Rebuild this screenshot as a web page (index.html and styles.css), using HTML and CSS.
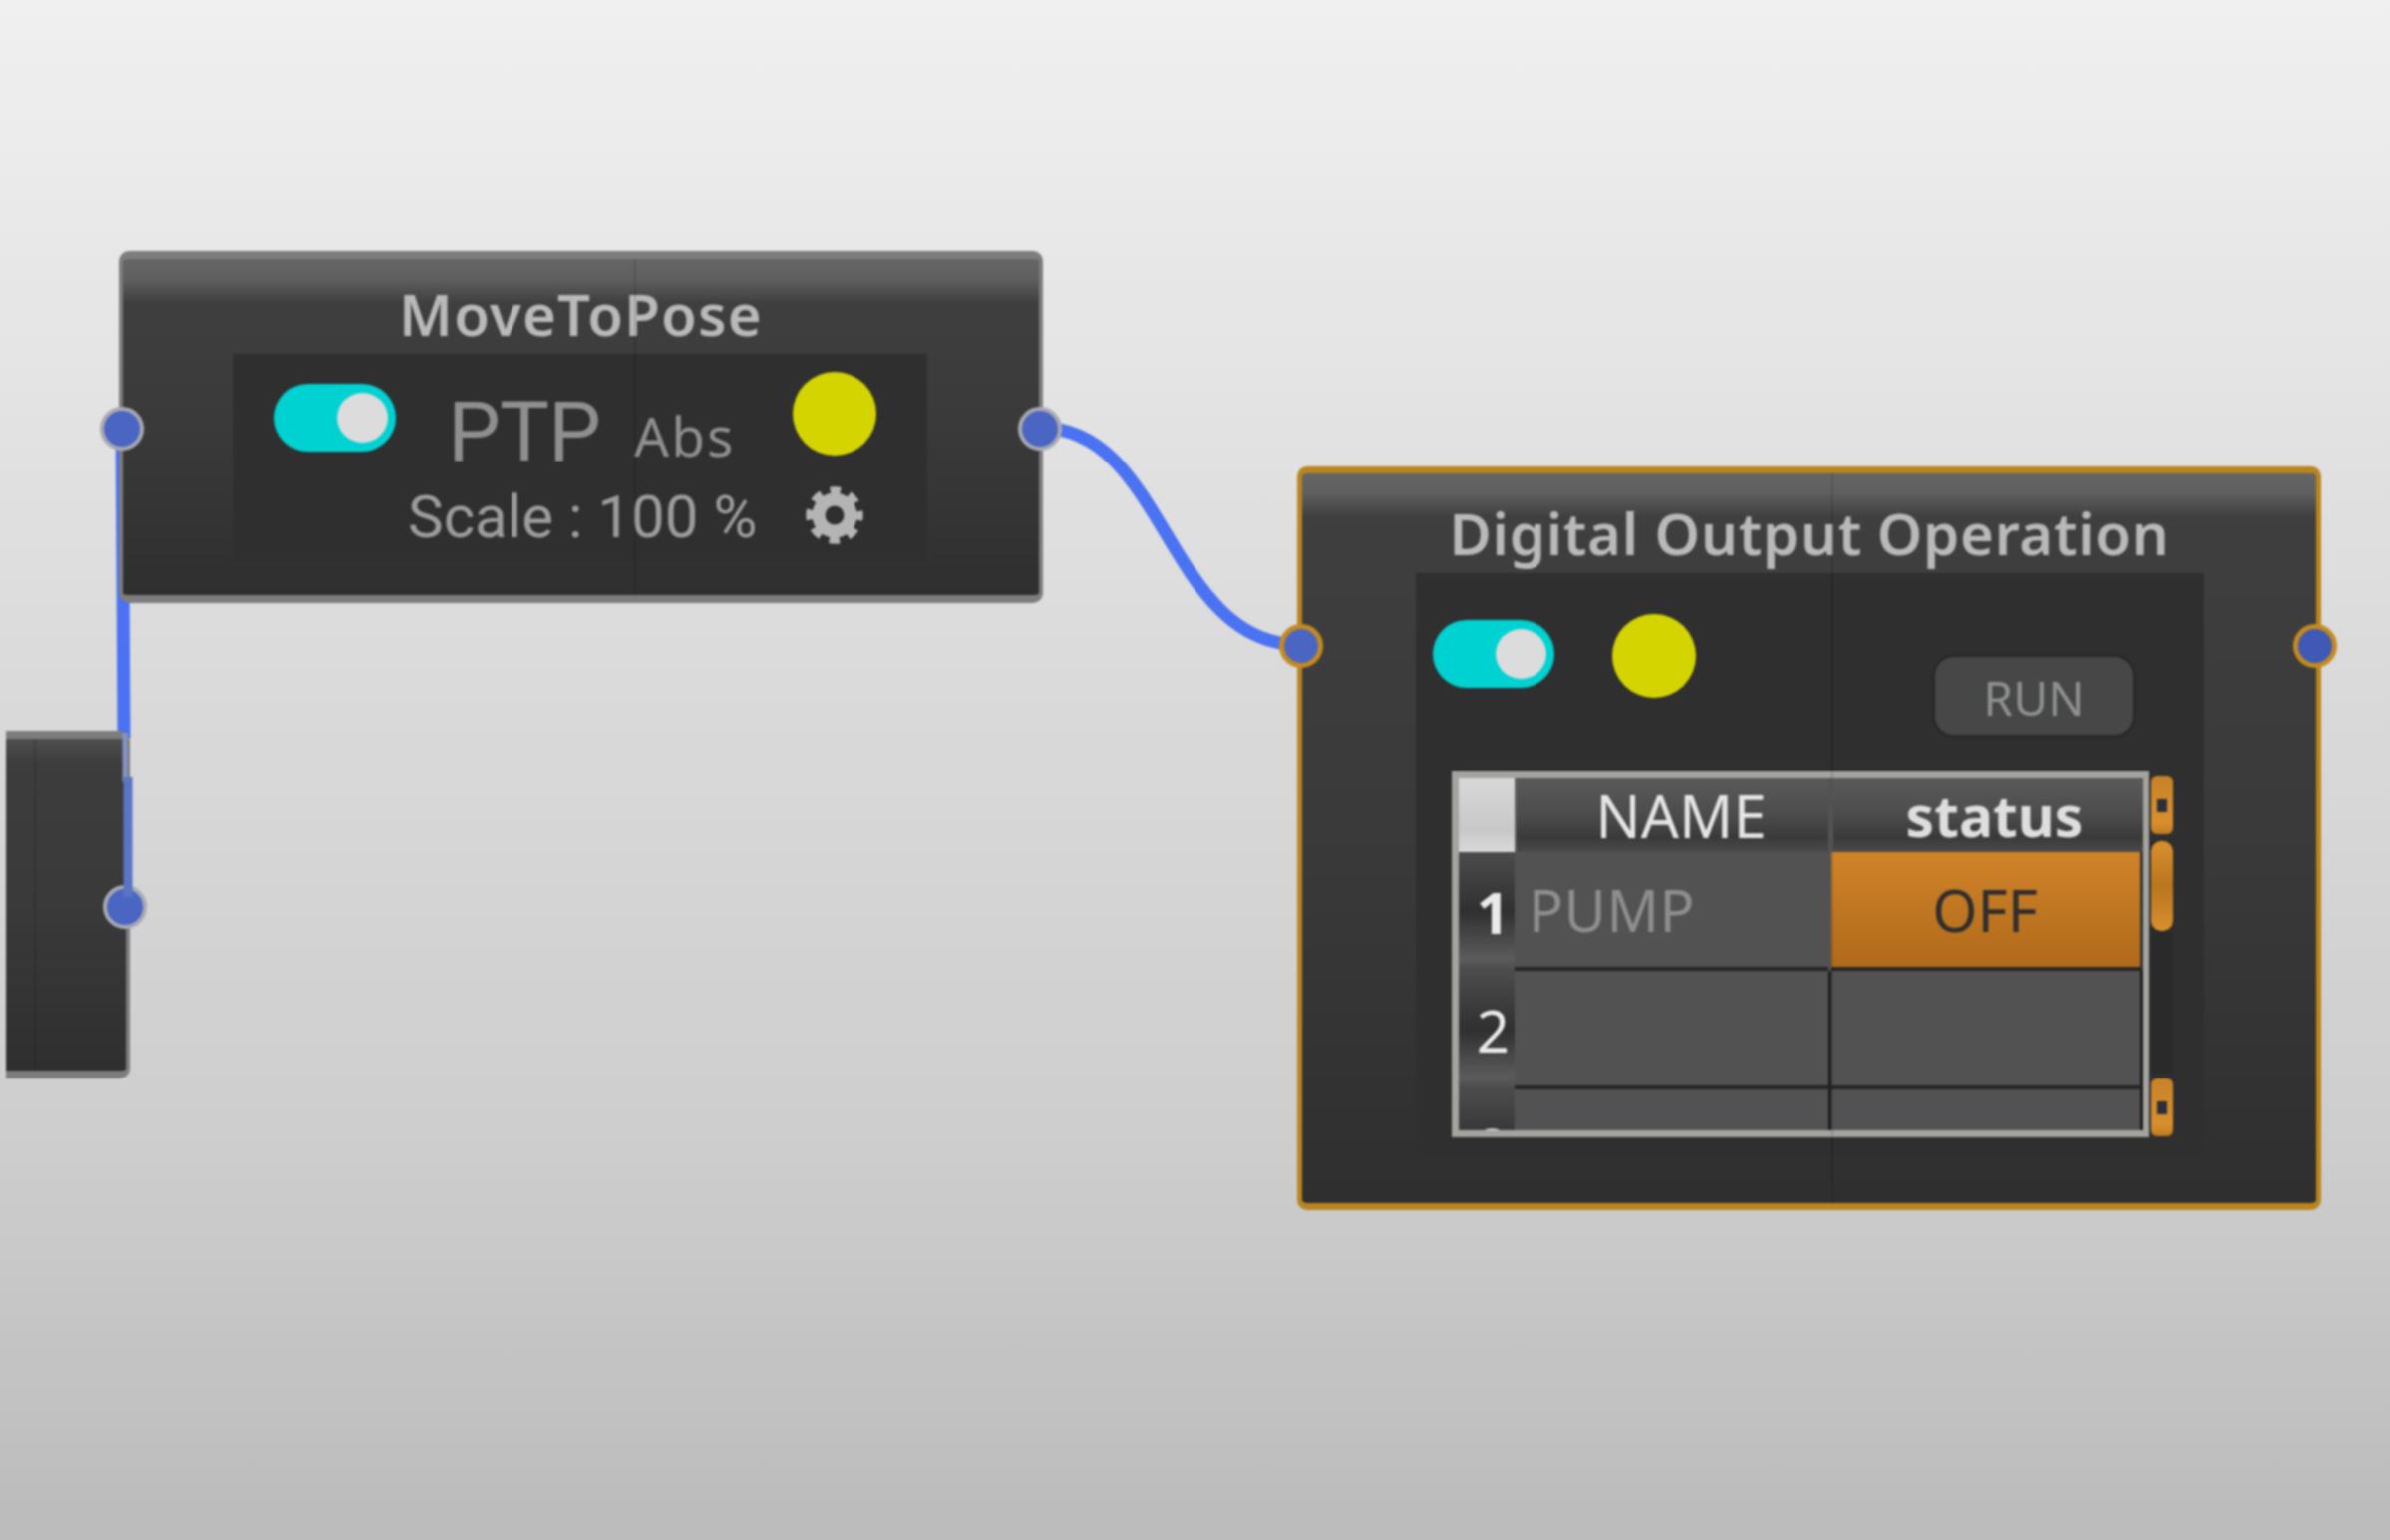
FILE: index.html
```html
<!DOCTYPE html>
<html lang="en">
<head>
  <meta charset="UTF-8">
  <title>Node Graph</title>
  <link rel="stylesheet" href="styles.css">
</head>
<body>
  <div class="canvas">
    <div class="scene">
      <svg class="wires" width="2397" height="1545" viewBox="0 0 2397 1545">
        <path class="wire" d="M1043 429 C1170 429 1170 647 1305 647"/>
        <path class="wire" d="M122 430 L124 740"/>
      </svg>

      <div class="node node-stub">
        <span class="port port-stub"></span>
      </div>

      <div class="node node-move">
        <span class="port port-left"></span>
        <span class="port port-right"></span>
        <div class="node-title">MoveToPose</div>
        <div class="panel panel-move">
          <div class="move-top">
            <span class="toggle"><span class="knob"></span></span>
            <span class="mode">PTP</span>
            <span class="mode-sub">Abs</span>
            <span class="lamp"></span>
          </div>
          <div class="move-bottom">
            <span class="scale">Scale : 100 %</span>
            <svg class="gear" viewBox="-29 -29 58 58">
              <circle class="gear-ring" r="16"/>
              <circle class="gear-teeth" r="25.2"/>
            </svg>
          </div>
        </div>
      </div>

      <div class="node node-output">
        <span class="port port-left"></span>
        <span class="port port-right"></span>
        <div class="node-title">Digital Output Operation</div>
        <div class="panel panel-output">
          <div class="output-top">
            <span class="toggle"><span class="knob"></span></span>
            <span class="lamp"></span>
            <button class="run-btn">RUN</button>
          </div>
          <div class="table-wrap">
            <div class="table">
              <div class="corner"></div>
              <div class="head">NAME</div>
              <div class="head head-status">status</div>

              <div class="row-num row-num-bold">1</div>
              <div class="cell cell-name">PUMP</div>
              <div class="cell cell-off">OFF</div>

              <div class="row-num">2</div>
              <div class="cell"></div>
              <div class="cell cell-status"></div>

              <div class="row-num">3</div>
              <div class="cell"></div>
              <div class="cell cell-status"></div>
            </div>
            <div class="scrollbar">
              <span class="scroll-btn"><i></i></span>
              <span class="scroll-track"><span class="scroll-thumb"></span></span>
              <span class="scroll-btn"><i></i></span>
            </div>
          </div>
        </div>
      </div>

      <svg class="wires wires-front" width="2397" height="1545" viewBox="0 0 2397 1545">
        <path class="wire-thin" d="M125 735 L125 785"/>
        <path class="wire-dim" d="M128 780 L128 900"/>
      </svg>
    </div>
  </div>
</body>
</html>
```

FILE: styles.css
```css
* { box-sizing: border-box; }
html, body { margin: 0; padding: 0; }
body { font-family: "Noto Sans", "Open Sans", sans-serif; background: #ddd; }

.canvas {
  width: 2397px;
  height: 1545px;
  overflow: hidden;
  background: linear-gradient(#f0f0f0 0, #dcdcdc 40%, #cdcdcd 75%, #bbbbbb 100%);
}
.scene {
  position: relative;
  width: 2397px;
  height: 1545px;
  filter: blur(1.3px);
}
.wires { position: absolute; left: 0; top: 0; }
.wires-front { z-index: 3; pointer-events: none; }
.wire { fill: none; stroke: #4a72f2; stroke-width: 13; }
.wire-dim { fill: none; stroke: #5a75c4; stroke-width: 9; }
.wire-thin { fill: none; stroke: #8494c4; stroke-width: 5; }

/* nodes sit on a free canvas */
.node {
  position: absolute;
  border: 4px solid #7d7d7d;
  border-top-width: 8px;
  border-bottom-width: 8px;
  border-radius: 10px;
  background: linear-gradient(#666 0, #5f5f5f 20px, #3f3f3f 44px, #3a3a3a 50%, #2f2f2f 100%);
}
/* faint seam the graph view leaves down each node */
.node::after {
  content: "";
  position: absolute;
  top: 0;
  bottom: 0;
  width: 2px;
  background: rgba(0, 0, 0, 0.12);
}
.node-move { left: 119px; top: 252px; width: 927px; height: 353px; }
.node-move::after { left: 513px; }
.node-output {
  left: 1301px; top: 468px; width: 1027px; height: 746px;
  border-color: #b9851f;
  border-width: 7px 5px 7px 5px;
}
.node-output::after { left: 530px; }
.node-stub {
  left: 6px; top: 733px; width: 124px; height: 349px;
  border-left: 0;
  border-radius: 0 10px 10px 0;
  background: linear-gradient(#4f4f4f 0, #3d3d3d 24px, #3a3a3a 50%, #2f2f2f 100%);
}
.node-stub::after { left: 28px; }

.node-title {
  text-align: center;
  color: #b9b9b9;
  font-weight: 600;
  font-size: 58px;
  line-height: 60px;
}
.node-move .node-title { padding-top: 25px; height: 95px; letter-spacing: 1.2px; }
.node-output .node-title { padding-top: 30px; height: 100px; letter-spacing: 0.7px; }

.port {
  position: absolute;
  width: 44px;
  height: 44px;
  border-radius: 50%;
  background: #4b66c2;
  border: 4px solid #a9a9b2;
  z-index: 2;
}
.node-move .port { top: 148px; }
.port-left { left: -23px; }
.port-right { right: -23px; }
.node-output .port { top: 151px; border-color: #c48a20; border-width: 5px; }
.node-output .port-right { right: -21px; background: #3f59b4; }
.node-output .port-left { left: -23px; }
.port-stub { right: -21px; top: 147px; }

.panel { background: #2f2f2f; }
.panel-move {
  width: 696px;
  height: 208px;
  margin-left: 111px;
  padding: 18px 0 0 41px;
}
.panel-output {
  width: 790px;
  height: 591px;
  margin-left: 114px;
  padding: 41px 0 0 17px;
}

.toggle {
  display: inline-block;
  position: relative;
  flex: none;
  width: 122px;
  height: 68px;
  border-radius: 34px;
  background: #00d2d2;
}
.knob {
  position: absolute;
  right: 8px;
  top: 9px;
  width: 51px;
  height: 50px;
  border-radius: 50%;
  background: #dcdcdc;
}
.lamp {
  display: block;
  flex: none;
  width: 84px;
  height: 84px;
  border-radius: 50%;
  background: #d4d400;
}

.move-top { display: flex; align-items: center; height: 83px; }
.move-top .toggle { margin-top: 8px; }
.mode {
  margin: 38px 0 0 52px;
  width: 150px;
  font-family: Roboto, sans-serif;
  font-size: 84px;
  line-height: 84px;
  letter-spacing: -1px;
  color: #8f8f8f;
  font-weight: 400;
}
.mode-sub {
  margin: 45px 0 0 37px;
  width: 159px;
  font-size: 55px;
  line-height: 52px;
  letter-spacing: 2px;
  color: #8f8f8f;
}
.move-bottom { display: flex; align-items: flex-start; margin-top: 32px; padding-left: 134px; }
.scale {
  width: 399px;
  margin-top: 2px;
  font-family: Roboto, sans-serif;
  font-size: 60px;
  line-height: 58px;
  color: #9c9c9c;
}
.gear { display: block; width: 58px; height: 58px; }
.gear-ring { fill: none; stroke: #b4b4b4; stroke-width: 13; }
.gear-teeth { fill: none; stroke: #b4b4b4; stroke-width: 7; stroke-dasharray: 10.5 9.29; stroke-dashoffset: 5.25; }

.output-top { display: flex; align-items: flex-start; height: 158px; }
.output-top .toggle { margin-top: 6px; }
.output-top .lamp { margin-left: 58px; }
.run-btn {
  margin: 40px 0 0 237px;
  width: 204px;
  height: 84px;
  border: 3px solid #292929;
  border-radius: 22px;
  background: #474747;
  color: #8d8f90;
  font-family: inherit;
  font-size: 48px;
  padding: 2px 0 0;
}

.table-wrap { display: flex; margin-left: 19px; }
.table {
  display: grid;
  grid-template-columns: 56px 314px 316px;
  grid-template-rows: 74px 119px 119px 119px;
  width: 699px;
  height: 367px;
  overflow: hidden;
  border: 7px solid #a3a39f;
  border-right-width: 6px;
  background: #525252;
}
.corner { background: linear-gradient(#d8d8d8, #c8c8c8 70%, #dadada); }
.head {
  display: flex;
  align-items: center;
  justify-content: center;
  padding-left: 18px;
  font-size: 60px;
  color: #e4e4e4;
  background: linear-gradient(#5a5a5a 0, #4c4c4c 50%, #3a3a3a 80%, #4a4a4a 100%);
  border-left: 2px solid #5f5f5f;
}
.head-status { font-weight: 700; font-size: 57px; color: #dedede; padding-left: 14px; margin-left: 3px; }
.row-num {
  display: flex;
  align-items: center;
  justify-content: flex-end;
  padding-right: 5px;
  font-size: 58px;
  color: #eaeaea;
  background: linear-gradient(#4c4c4c 0, #303030 50%, #5c5c5c 90%, #4a4a4a 100%);
}
.row-num-bold { font-weight: 700; }
.cell {
  display: flex;
  align-items: center;
  font-size: 58px;
  background: #525252;
  border-bottom: 4px solid #262626;
}
.cell-name { color: #8e8e8e; padding-left: 14px; letter-spacing: 0.5px; }
.cell-status { border-left: 3px solid #1c1c1c; border-right: 3px solid #1c1c1c; }
.cell-off {
  margin-left: 3px;
  justify-content: center;
  color: #2e2e2e;
  background: linear-gradient(#d08329, #b06a1b);
  border-right: 3px solid #333;
}

.scrollbar {
  display: flex;
  flex-direction: column;
  flex: none;
  width: 22px;
  height: 361px;
  margin: 5px 0 0 2px;
  border-radius: 6px;
}
.scroll-btn {
  display: flex;
  align-items: center;
  justify-content: center;
  height: 58px;
  flex: none;
  border-radius: 6px;
  background: linear-gradient(#c88228, #d98f2e 80%, #c07a20);
}
.scroll-btn i { display: block; width: 10px; height: 13px; background: #2a2f3a; }
.scroll-track {
  flex: 1;
  margin: 7px 0 5px;
  border-radius: 4px;
  background: #2a2a2a;
}
.scroll-thumb {
  display: block;
  height: 90px;
  border-radius: 10px;
  background: linear-gradient(#d88f2e, #b97620 50%, #d88f2e);
}
```
